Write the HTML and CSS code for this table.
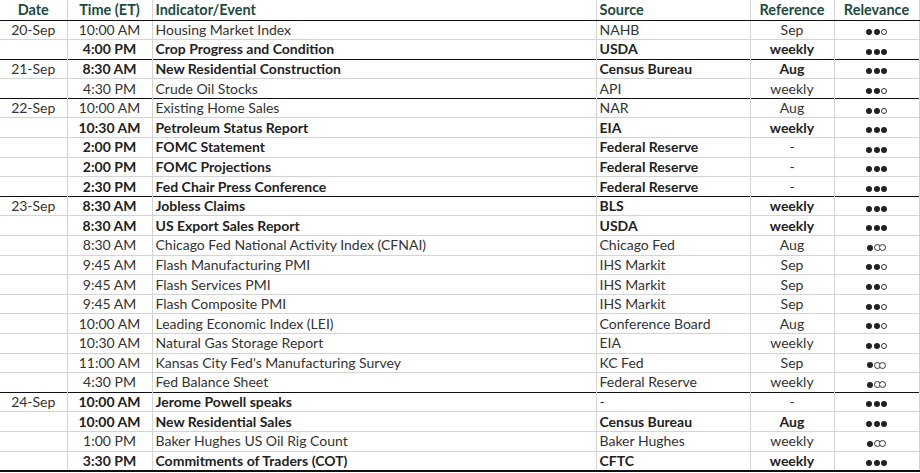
FILE: index.html
```html
<!DOCTYPE html>
<html>
<head>
<meta charset="utf-8">
<link rel="stylesheet" href="styles.css">
</head>
<body>
<table class="cal">
  <colgroup>
    <col class="c-date"><col class="c-time"><col class="c-ev"><col class="c-src"><col class="c-ref"><col class="c-rel">
  </colgroup>
  <thead>
    <tr>
      <th class="ctr">Date</th><th class="ctr">Time (ET)</th><th class="left">Indicator/Event</th><th class="left">Source</th><th class="ctr">Reference</th><th class="ctr">Relevance</th>
    </tr>
  </thead>
  <tbody>
    <tr class="grp"><td class="ctr">20-Sep</td><td class="ctr">10:00 AM</td><td>Housing Market Index</td><td>NAHB</td><td class="ctr">Sep</td><td class="ctr"><span class="dots"><i class="f"></i><i class="f"></i><i class="e"></i></span></td></tr>
    <tr class="b"><td class="ctr"></td><td class="ctr">4:00 PM</td><td>Crop Progress and Condition</td><td>USDA</td><td class="ctr">weekly</td><td class="ctr"><span class="dots"><i class="f"></i><i class="f"></i><i class="f"></i></span></td></tr>
    <tr class="grp b"><td class="ctr">21-Sep</td><td class="ctr">8:30 AM</td><td>New Residential Construction</td><td>Census Bureau</td><td class="ctr">Aug</td><td class="ctr"><span class="dots"><i class="f"></i><i class="f"></i><i class="f"></i></span></td></tr>
    <tr><td class="ctr"></td><td class="ctr">4:30 PM</td><td>Crude Oil Stocks</td><td>API</td><td class="ctr">weekly</td><td class="ctr"><span class="dots"><i class="f"></i><i class="f"></i><i class="e"></i></span></td></tr>
    <tr class="grp"><td class="ctr">22-Sep</td><td class="ctr">10:00 AM</td><td>Existing Home Sales</td><td>NAR</td><td class="ctr">Aug</td><td class="ctr"><span class="dots"><i class="f"></i><i class="f"></i><i class="e"></i></span></td></tr>
    <tr class="b"><td class="ctr"></td><td class="ctr">10:30 AM</td><td>Petroleum Status Report</td><td>EIA</td><td class="ctr">weekly</td><td class="ctr"><span class="dots"><i class="f"></i><i class="f"></i><i class="f"></i></span></td></tr>
    <tr class="b"><td class="ctr"></td><td class="ctr">2:00 PM</td><td>FOMC Statement</td><td>Federal Reserve</td><td class="ctr nb">-</td><td class="ctr"><span class="dots"><i class="f"></i><i class="f"></i><i class="f"></i></span></td></tr>
    <tr class="b"><td class="ctr"></td><td class="ctr">2:00 PM</td><td>FOMC Projections</td><td>Federal Reserve</td><td class="ctr nb">-</td><td class="ctr"><span class="dots"><i class="f"></i><i class="f"></i><i class="f"></i></span></td></tr>
    <tr class="b"><td class="ctr"></td><td class="ctr">2:30 PM</td><td>Fed Chair Press Conference</td><td>Federal Reserve</td><td class="ctr nb">-</td><td class="ctr"><span class="dots"><i class="f"></i><i class="f"></i><i class="f"></i></span></td></tr>
    <tr class="grp b"><td class="ctr">23-Sep</td><td class="ctr">8:30 AM</td><td>Jobless Claims</td><td>BLS</td><td class="ctr">weekly</td><td class="ctr"><span class="dots"><i class="f"></i><i class="f"></i><i class="f"></i></span></td></tr>
    <tr class="b"><td class="ctr"></td><td class="ctr">8:30 AM</td><td>US Export Sales Report</td><td>USDA</td><td class="ctr">weekly</td><td class="ctr"><span class="dots"><i class="f"></i><i class="f"></i><i class="f"></i></span></td></tr>
    <tr><td class="ctr"></td><td class="ctr">8:30 AM</td><td>Chicago Fed National Activity Index (CFNAI)</td><td>Chicago Fed</td><td class="ctr">Aug</td><td class="ctr"><span class="dots one"><i class="f"></i><i class="e"></i><i class="e"></i></span></td></tr>
    <tr><td class="ctr"></td><td class="ctr">9:45 AM</td><td>Flash Manufacturing PMI</td><td>IHS Markit</td><td class="ctr">Sep</td><td class="ctr"><span class="dots"><i class="f"></i><i class="f"></i><i class="e"></i></span></td></tr>
    <tr><td class="ctr"></td><td class="ctr">9:45 AM</td><td>Flash Services PMI</td><td>IHS Markit</td><td class="ctr">Sep</td><td class="ctr"><span class="dots"><i class="f"></i><i class="f"></i><i class="e"></i></span></td></tr>
    <tr><td class="ctr"></td><td class="ctr">9:45 AM</td><td>Flash Composite PMI</td><td>IHS Markit</td><td class="ctr">Sep</td><td class="ctr"><span class="dots"><i class="f"></i><i class="f"></i><i class="e"></i></span></td></tr>
    <tr><td class="ctr"></td><td class="ctr">10:00 AM</td><td>Leading Economic Index (LEI)</td><td>Conference Board</td><td class="ctr">Aug</td><td class="ctr"><span class="dots"><i class="f"></i><i class="f"></i><i class="e"></i></span></td></tr>
    <tr><td class="ctr"></td><td class="ctr">10:30 AM</td><td>Natural Gas Storage Report</td><td>EIA</td><td class="ctr">weekly</td><td class="ctr"><span class="dots"><i class="f"></i><i class="f"></i><i class="e"></i></span></td></tr>
    <tr><td class="ctr"></td><td class="ctr">11:00 AM</td><td>Kansas City Fed's Manufacturing Survey</td><td>KC Fed</td><td class="ctr">Sep</td><td class="ctr"><span class="dots one"><i class="f"></i><i class="e"></i><i class="e"></i></span></td></tr>
    <tr><td class="ctr"></td><td class="ctr">4:30 PM</td><td>Fed Balance Sheet</td><td>Federal Reserve</td><td class="ctr">weekly</td><td class="ctr"><span class="dots one"><i class="f"></i><i class="e"></i><i class="e"></i></span></td></tr>
    <tr class="grp b"><td class="ctr">24-Sep</td><td class="ctr">10:00 AM</td><td>Jerome Powell speaks</td><td class="nb">-</td><td class="ctr nb">-</td><td class="ctr"><span class="dots"><i class="f"></i><i class="f"></i><i class="f"></i></span></td></tr>
    <tr class="b"><td class="ctr"></td><td class="ctr">10:00 AM</td><td>New Residential Sales</td><td>Census Bureau</td><td class="ctr">Aug</td><td class="ctr"><span class="dots"><i class="f"></i><i class="f"></i><i class="f"></i></span></td></tr>
    <tr><td class="ctr"></td><td class="ctr">1:00 PM</td><td>Baker Hughes US Oil Rig Count</td><td>Baker Hughes</td><td class="ctr">weekly</td><td class="ctr"><span class="dots one"><i class="f"></i><i class="e"></i><i class="e"></i></span></td></tr>
    <tr class="b last"><td class="ctr"></td><td class="ctr">3:30 PM</td><td>Commitments of Traders (COT)</td><td>CFTC</td><td class="ctr">weekly</td><td class="ctr"><span class="dots"><i class="f"></i><i class="f"></i><i class="f"></i></span></td></tr>
  </tbody>
</table>
</body>
</html>
```

FILE: styles.css
```css
html, body {
  margin: 0;
  padding: 0;
  background: #fff;
}
body {
  font-family: "Lato", "Liberation Sans", sans-serif;
  font-size: 14px;
  color: #333;
}
.cal {
  border-collapse: collapse;
  table-layout: fixed;
  width: 919px;
}
.c-date { width: 67px; }
.c-time { width: 85px; }
.c-ev { width: 444px; }
.c-src { width: 154px; }
.c-ref { width: 84px; }
.c-rel { width: 85px; }

.cal th, .cal td {
  padding: 0 0 0 3px;
  border-left: 1px solid #d4d4d4;
  border-right: 1px solid #d4d4d4;
  border-top: 1px solid #d4d4d4;
  white-space: nowrap;
  line-height: 16px;
  vertical-align: middle;
}
.cal th:first-child, .cal td:first-child {
  border-left: none;
}
.cal th {
  height: 19.5px;
  font-size: 14.5px;
  font-weight: 700;
  color: #1d4b40;
  border-top: none;
  border-bottom: 1px solid #111;
  text-align: left;
}
.cal td {
  height: 18.6px;
}
.cal .ctr {
  text-align: center;
  padding-left: 0;
}
.cal tr.grp td {
  border-top: 1px solid #111;
}
.cal tr.last td {
  border-bottom: 2px solid #111;
}
.cal tr.b td {
  font-weight: 700;
  color: #222;
}
.cal tr.b td:first-child,
.cal tr.b td.nb {
  font-weight: 400;
  color: #333;
}

.dots {
  display: inline-flex;
  align-items: center;
  gap: 1.5px;
  vertical-align: middle;
  margin-top: 2px;
}
.dots i {
  display: block;
  width: 6px;
  height: 6px;
  border-radius: 50%;
  box-sizing: border-box;
}
.dots i.f {
  background: #222;
}
.dots i.e {
  border: 1px solid #333;
  background: #fff;
}
.dots.one {
  gap: 0;
}
.dots.one i.e {
  width: 7px;
  height: 7px;
}
.dots.one i.e + i.e {
  margin-left: -2px;
}
.dots.one i.f {
  margin-right: 1.5px;
}
```
